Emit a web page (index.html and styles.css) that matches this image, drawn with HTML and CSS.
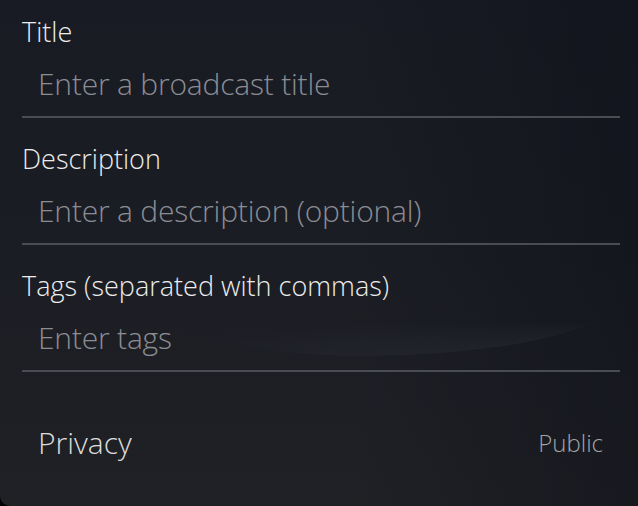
FILE: index.html
```html
<!DOCTYPE html>
<html>
<head>
<meta charset="utf-8">
<link rel="stylesheet" href="styles.css">
</head>
<body>
<div class="panel">
  <div class="swoosh"></div>
  <div class="field">
    <div class="label">Title</div>
    <div class="input">Enter a broadcast title</div>
  </div>
  <div class="field">
    <div class="label">Description</div>
    <div class="input">Enter a description (optional)</div>
  </div>
  <div class="field">
    <div class="label">Tags (separated with commas)</div>
    <div class="input">Enter tags</div>
  </div>
  <div class="row">
    <span class="row-label">Privacy</span>
    <span class="row-value">Public</span>
  </div>
</div>
</body>
</html>
```
FILE: styles.css
```css
html, body {
  margin: 0;
  padding: 0;
  background: #000;
}
body {
  width: 638px;
  height: 506px;
  overflow: hidden;
  font-family: "Open Sans", "Noto Sans", sans-serif;
  font-weight: 300;
}
.panel {
  position: relative;
  width: 638px;
  height: 506px;
  box-sizing: border-box;
  padding: 14px 18px 0 22px;
  border-bottom-left-radius: 10px;
  background:
    linear-gradient(90deg, rgba(0,0,0,0) 0%, rgba(0,0,0,0) 55%, rgba(8,10,20,0.35) 100%),
    linear-gradient(180deg, #181b23 0%, #1b1d24 50%, #202125 100%);
  overflow: hidden;
}
.swoosh {
  position: absolute;
  left: 150px;
  top: 300px;
  width: 465px;
  height: 56px;
  border-radius: 0 0 55% 45% / 0 0 100% 100%;
  background: linear-gradient(90deg, rgba(150,160,175,0) 0%, rgba(150,160,175,0.03) 35%, rgba(150,160,175,0.08) 75%, rgba(150,160,175,0.13) 97%, rgba(150,160,175,0) 100%);
  -webkit-mask-image: linear-gradient(180deg, transparent 35%, black 100%);
  mask-image: linear-gradient(180deg, transparent 35%, black 100%);
  pointer-events: none;
}
.field {
  position: relative;
  margin-bottom: 23px;
}
.label {
  color: #ececec;
  font-size: 27px;
  line-height: 36px;
}
.input {
  color: #8b8d93;
  font-size: 30px;
  line-height: 40px;
  letter-spacing: -0.2px;
  padding: 14px 0 12px 16px;
  border-bottom: 2px solid #4a4c53;
}
.row {
  display: flex;
  justify-content: space-between;
  align-items: flex-start;
  padding: 28px 17px 0 16px;
}
.row-label {
  color: #dcdcdc;
  font-size: 30px;
  line-height: 40px;
}
.row-value {
  color: #a2a4a8;
  font-size: 24px;
  line-height: 40px;
}
```
